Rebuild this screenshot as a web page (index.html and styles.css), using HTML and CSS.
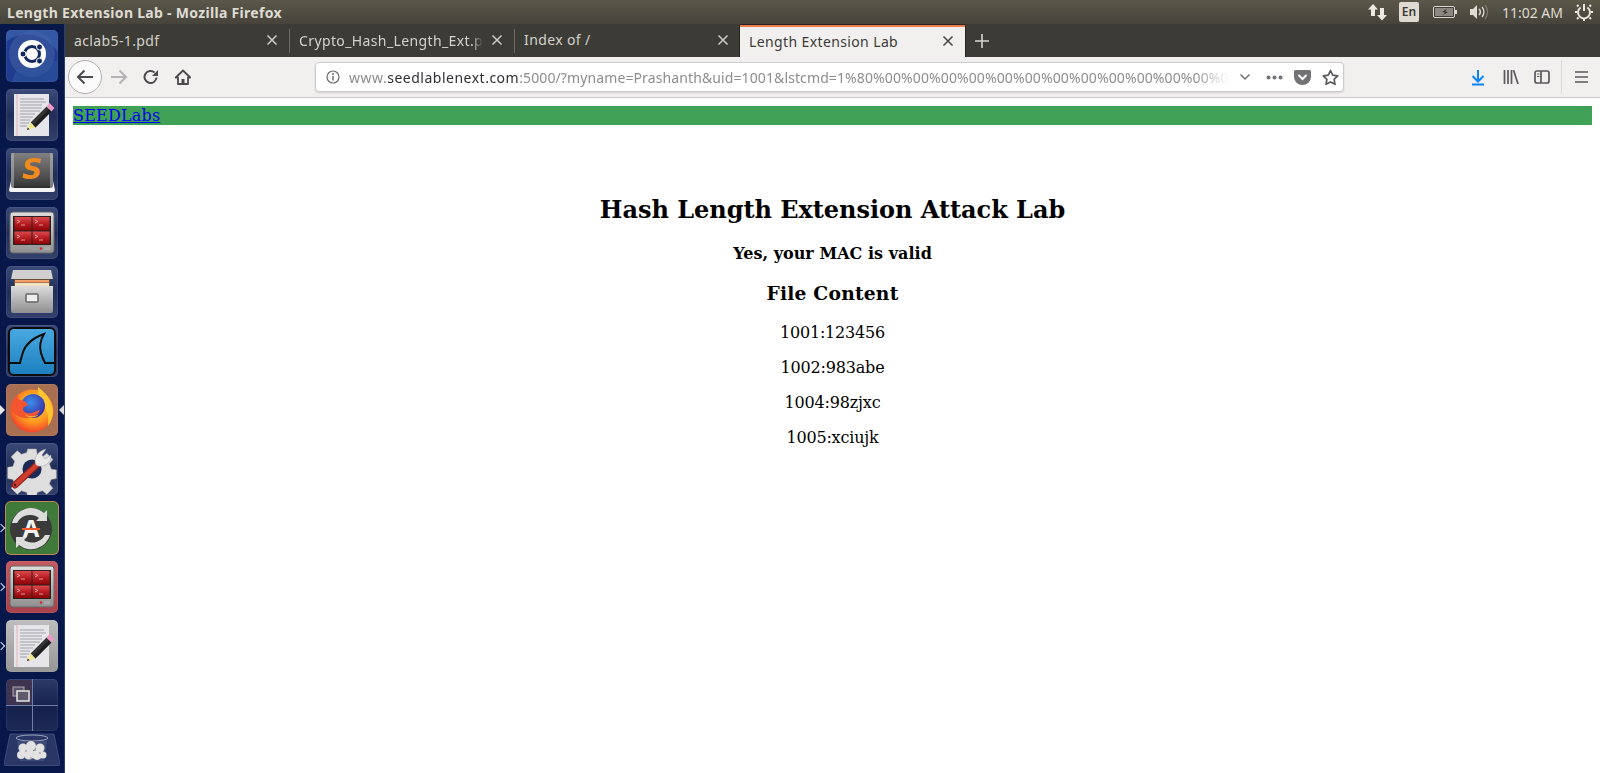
FILE: index.html
```html
<!DOCTYPE html>
<html lang="en">
<head>
<meta charset="utf-8">
<title>Length Extension Lab - Mozilla Firefox</title>
<link rel="stylesheet" href="styles.css">
</head>
<body>
<svg class="defs" aria-hidden="true">
  <defs>
    <linearGradient id="metal" x1="0" y1="0" x2="0" y2="1"><stop offset="0" stop-color="#dcdcdc"/><stop offset="1" stop-color="#8f8f8f"/></linearGradient>
    <linearGradient id="redA" x1="0" y1="0" x2="0" y2="1"><stop offset="0" stop-color="#dc4a4e"/><stop offset=".5" stop-color="#b81c20"/><stop offset="1" stop-color="#8a0508"/></linearGradient>
    <linearGradient id="sharkBlue" x1="0" y1="0" x2="0" y2="1"><stop offset="0" stop-color="#4aa9e0"/><stop offset="1" stop-color="#1b80bf"/></linearGradient>
    <linearGradient id="subBody" x1="0" y1="0" x2="0" y2="1"><stop offset="0" stop-color="#808080"/><stop offset=".75" stop-color="#4a4a4a"/><stop offset="1" stop-color="#2e2e2e"/></linearGradient>
    <radialGradient id="foxRing" cx=".55" cy=".4" r=".65"><stop offset="0" stop-color="#ffd93d"/><stop offset=".55" stop-color="#ff9a1f"/><stop offset="1" stop-color="#f0342c"/></radialGradient>
    <radialGradient id="foxGlobe" cx=".4" cy=".35" r=".7"><stop offset="0" stop-color="#3a8ff0"/><stop offset="1" stop-color="#3b2a9c"/></radialGradient>
    <symbol id="i-editor" viewBox="0 0 52 52">
      <path d="M8 5h35v42H8z" fill="#e6e6ea"/>
      <path d="M11 5v42" stroke="#e6a6a6" stroke-width=".8"/>
      <path d="M14 10h24M14 13h26M14 16h22M14 19h22M14 22h20M14 25h15M14 28h13M14 31h10M14 34h9M14 37h7" stroke="#85858a" stroke-width=".7"/>
      <path d="M24.600 33.500L40.600 17.500 45.400 22.500 29.400 38.500z" fill="#333"/>
      <path d="M27 36L43 20 45.400 22.500 29.400 38.500z" fill="#1f1f1f"/>
      <path d="M40.600 17.500l3-3.500 4.800 5-3 3.500z" fill="#ec9ac6"/>
      <path d="M24.600 33.500l4.800 5-8.400 2.500z" fill="#f4e78a"/>
      <path d="M21 41l.8-2.600 1.800 1.800z" fill="#222"/>
    </symbol>
    <symbol id="i-term" viewBox="0 0 52 52">
      <rect x="4" y="5" width="44" height="41" rx="3" fill="url(#metal)" stroke="#666"/>
      <rect x="7" y="9" width="38" height="29" fill="#2b2020"/>
      <rect x="8.500" y="10" width="17" height="13.500" fill="url(#redA)"/>
      <rect x="26.500" y="10" width="17" height="13.500" fill="url(#redA)"/>
      <rect x="8.500" y="24.500" width="17" height="12.500" fill="url(#redA)"/>
      <rect x="26.500" y="24.500" width="17" height="12.500" fill="url(#redA)"/>
      <path d="M11 13l3 1.500-3 1.500M15 18h4M29 13l3 1.500-3 1.500M33 18h4M11 28l3 1.500-3 1.500M15 33h4M29 28l3 1.500-3 1.500M33 33h4" fill="none" stroke="#f3d0d0" stroke-width=".7"/>
      <circle cx="35" cy="41.500" r="1.200" fill="#e02424"/>
      <rect x="38" y="40" width="6" height="3" fill="#a8a8a8"/>
    </symbol>
  </defs>
</svg>

<header class="panel">
  <span class="panel-title">Length Extension Lab - Mozilla Firefox</span>
  <div class="tray">
    <svg class="tray-arrows" width="19" height="18" viewBox="0 0 19 18"><path d="M5 1L0 6.500h3V13h4V6.500h3zM14 17.500l5-5.500h-3V5h-4v7H9z" fill="#ece9e2"/></svg>
    <span class="tray-lang">En</span>
    <svg class="tray-battery" width="24" height="12" viewBox="0 0 24 12"><rect x=".5" y=".5" width="21" height="11" rx="1.500" fill="#3c3b36" stroke="#d8d6cf"/><rect x="2" y="2" width="18" height="8" fill="#8a8880"/><rect x="22" y="4" width="2" height="4" fill="#d8d6cf"/><path d="M14 2.500L9.500 6l3 .5L9 9.500 15 6l-3-.5z" fill="#2b2a27"/></svg>
    <svg class="tray-volume" width="20" height="16" viewBox="0 0 20 16"><path d="M1 5h3l4-4v14l-4-4H1z" fill="#dedcd5"/><path d="M10 5a4 4 0 0 1 0 6" fill="none" stroke="#dedcd5" stroke-width="1.500"/><path d="M13 3a7.500 7.500 0 0 1 0 10" fill="none" stroke="#dedcd5" stroke-width="1.300"/><path d="M16 1a11 11 0 0 1 0 14" fill="none" stroke="#7d7b73" stroke-width="1.200"/></svg>
    <span class="tray-clock">11:02 AM</span>
    <svg class="tray-gear" width="18" height="18" viewBox="0 0 18 18"><path d="M9 1v7" stroke="#e8e6df" stroke-width="2"/><path d="M5.600 4.500a6 6 0 1 0 6.800 0" fill="none" stroke="#e8e6df" stroke-width="2"/><path d="M9 15v3M2 9H0M18 9h-2M3.500 3.500L2 2M14.500 3.500L16 2M3.500 14.500L2 16M14.500 14.500L16 16" stroke="#e8e6df" stroke-width="2"/></svg>
  </div>
</header>

<div class="workspace">
  <nav class="launcher">
    <div class="tile tile-home">
      <svg viewBox="0 0 52 52"><circle cx="26" cy="24" r="23" fill="#fff" opacity=".1"/><path d="M0 12C14 0 38 2 52 22V0H0z" fill="#3f64ac" opacity=".7"/><path d="M6 52C10 32 30 24 52 32v20z" fill="#2f559f" opacity=".6"/><circle cx="26" cy="24" r="14" fill="#fff"/><circle cx="26" cy="24" r="7.500" fill="none" stroke="#12285f" stroke-width="3"/><circle cx="33.500" cy="17" r="3" fill="#12285f" stroke="#fff"/><circle cx="17" cy="24" r="3" fill="#12285f" stroke="#fff"/><circle cx="33.500" cy="31" r="3" fill="#12285f" stroke="#fff"/></svg>
    </div>
    <div class="tile"><svg viewBox="0 0 52 52"><use href="#i-editor"/></svg></div>
    <div class="tile">
      <svg viewBox="0 0 52 52"><path d="M5 33h42l2 9a2 2 0 0 1-2 2H5a2 2 0 0 1-2-2z" fill="#f4f4f4"/><rect x="5" y="5" width="42" height="35" rx="3" fill="url(#subBody)"/><rect x="5" y="5" width="3" height="35" fill="#c4c4c4" opacity=".5"/><rect x="44" y="5" width="3" height="35" fill="#c4c4c4" opacity=".5"/><text class="sublime" x="26" y="31" text-anchor="middle">S</text></svg>
    </div>
    <div class="tile"><svg viewBox="0 0 52 52"><use href="#i-term"/></svg></div>
    <div class="tile">
      <svg viewBox="0 0 52 52"><path d="M7 4h38l2 9H5z" fill="#d0d0d0"/><path d="M8 13h36v9H8z" fill="#6a4b3a"/><path d="M9 14h34v2.500H9z" fill="#f0a068"/><path d="M9 17h34v3H9z" fill="#f4e3c2"/><path d="M5 20h42v25a2 2 0 0 1-2 2H7a2 2 0 0 1-2-2z" fill="url(#metal)"/><rect x="20" y="28" width="12" height="8" rx="1" fill="#eee" stroke="#666" stroke-width="1.500"/></svg>
    </div>
    <div class="tile">
      <svg viewBox="0 0 52 52"><rect x="3" y="3" width="46" height="47" rx="5" fill="url(#sharkBlue)" stroke="#0c0c0c" stroke-width="2"/><path d="M4 38h10c2-8 3-14 7-18 5-6 11-9 17-11-3 5-5 12-3 19 1 4 3 8 4 10h9" fill="none" stroke="#0c0c0c" stroke-width="2"/></svg>
    </div>
    <div class="tile tile-active">
      <span class="pip pip-solid-l"></span><span class="pip pip-solid-r"></span>
      <svg viewBox="0 0 52 52"><circle cx="26" cy="27" r="21.500" fill="url(#foxRing)"/><path d="M32 3c5 4 14 11 15 24 0 6-2 11-5 15 1-7 0-13-4-19-3-5-7-11-6-20z" fill="#ffc42e"/><circle cx="27" cy="22" r="12" fill="url(#foxGlobe)"/><path d="M5 22c1-5 4-9 7-12-1 3 0 5 2 6 4 0 7 3 8 5-2 1-5 2-5 4 0 3 5 5 9 4 3-1 6-3 8-3-2 5-8 9-15 8-8-1-14-5-14-12z" fill="#f4552e"/><path d="M19 30c4 3 10 3 14 0-2 4-12 5-14 0z" fill="#ffb52e"/></svg>
    </div>
    <div class="tile">
      <svg viewBox="0 0 52 52"><g transform="translate(3.400 3.400) scale(.87)"><path d="M21 3h10l1 7 6 2 5-4 7 7-4 5 2 6 6 1v10l-6 1-2 5 4 5-7 7-5-4-6 2-1 5H21l-1-5-6-2-5 4-7-7 4-5-2-5-6-1V24l6-1 2-6-4-5 7-7 5 4 6-2z" fill="#dedede" stroke="#a8a8a8" stroke-width=".6"/><circle cx="26" cy="26" r="11" fill="#1d2a58"/></g><path d="M9 42L33 20" stroke="#8e2118" stroke-width="7" stroke-linecap="round"/><path d="M9 42L33 20" stroke="#cf3d2e" stroke-width="4.500" stroke-linecap="round"/><circle cx="9" cy="42" r="1.300" fill="#5a120c"/><path d="M30 22c-3-6 1-14 10-16l-4 6 3 4 6-4c1 8-8 14-15 10z" fill="#e8e8e8" stroke="#999" stroke-width=".5"/></svg>
    </div>
    <div class="tile tile-update">
      <span class="pip pip-hollow"></span>
      <svg viewBox="0 0 52 52"><circle cx="25" cy="27" r="21" fill="#3a3a3a"/><path d="M6 21A19.500 19.500 0 0 1 38 11l3-3v11H30l3-3A14.500 14.500 0 0 0 11 21z" fill="#dcdcdc"/><path d="M44 33A19.500 19.500 0 0 1 13 43l-3 3V35h11l-3 3a14.500 14.500 0 0 0 21-5z" fill="#dcdcdc"/><text class="update-a" x="25" y="35" text-anchor="middle">A</text><rect x="16" y="26" width="18" height="2" fill="#f0582c"/></svg>
    </div>
    <div class="tile tile-term-on">
      <span class="pip pip-hollow"></span>
      <svg viewBox="0 0 52 52"><use href="#i-term"/></svg>
    </div>
    <div class="tile tile-editor-on">
      <span class="pip pip-hollow"></span>
      <svg viewBox="0 0 52 52"><use href="#i-editor"/></svg>
    </div>
    <div class="tile tile-spaces">
      <svg viewBox="0 0 52 52"><rect x="1" y="1" width="25" height="25" fill="#3e3450"/><path d="M26.500 0v52M0 26.500h52" stroke="#727da3" stroke-width="1"/><rect x="7" y="8" width="11" height="9" fill="#5b556c" stroke="#aaa"/><rect x="11" y="12" width="12" height="10" fill="#5f5a6b" stroke="#e6e6e6" stroke-width="1.500"/></svg>
    </div>
    <div class="trash">
      <svg viewBox="0 0 56 33"><path d="M6 1h44l6 30a1.500 1.500 0 0 1-1.500 1.500h-53A1.500 1.500 0 0 1 0 31z" fill="#2a3766" stroke="#4d5a88" stroke-width=".7"/><ellipse cx="28" cy="5" rx="16" ry="3" fill="none" stroke="#9aa3bc" stroke-width="1"/><path d="M13 8l3 20h24l3-20" fill="#46527c" opacity=".7"/><g fill="#e2e2e2"><circle cx="19" cy="15" r="4.500"/><circle cx="27" cy="13" r="5"/><circle cx="36" cy="15" r="4.500"/><circle cx="17" cy="22" r="4"/><circle cx="25" cy="21" r="5.500"/><circle cx="33" cy="22" r="5"/><circle cx="39" cy="22" r="3.500"/></g><g fill="#a9a9a9"><circle cx="22" cy="18" r="1"/><circle cx="31" cy="17" r="1"/><circle cx="27" cy="25" r="1"/><circle cx="36" cy="20" r="1"/></g></svg>
    </div>
  </nav>

  <div class="browser">
    <div class="tabstrip">
      <div class="tab tab-sep"><span class="tab-title">aclab5-1.pdf</span><svg class="tab-close" width="12" height="12" viewBox="0 0 12 12"><path d="M1.500 1.500l9 9M10.500 1.500l-9 9"/></svg></div>
      <div class="tab tab-sep"><span class="tab-title tab-fade">Crypto_Hash_Length_Ext.p</span><svg class="tab-close" width="12" height="12" viewBox="0 0 12 12"><path d="M1.500 1.500l9 9M10.500 1.500l-9 9"/></svg></div>
      <div class="tab"><span class="tab-title">Index of /</span><svg class="tab-close" width="12" height="12" viewBox="0 0 12 12"><path d="M1.500 1.500l9 9M10.500 1.500l-9 9"/></svg></div>
      <div class="tab tab-active"><span class="tab-title">Length Extension Lab</span><svg class="tab-close" width="12" height="12" viewBox="0 0 12 12"><path d="M1.500 1.500l9 9M10.500 1.500l-9 9"/></svg></div>
      <svg class="tab-new" width="14" height="14" viewBox="0 0 14 14"><path d="M7 0v14M0 7h14" stroke="#d8d6d0" stroke-width="1.600"/></svg>
    </div>

    <div class="navbar">
      <span class="back-btn"><svg width="18" height="18" viewBox="0 0 18 18"><path d="M17 9H2M8.500 2.500L2 9l6.500 6.500" fill="none" stroke="#4a4a4f" stroke-width="2"/></svg></span>
      <svg class="nav-fwd" width="18" height="18" viewBox="0 0 18 18"><path d="M1 9h15M9.500 2.500L16 9l-6.500 6.500" fill="none" stroke="#b4b4b6" stroke-width="2"/></svg>
      <svg class="nav-reload" width="16" height="16" viewBox="0 0 16 16"><path d="M13.500 8.500A6 6 0 1 1 11.500 3.500" fill="none" stroke="#4a4a4f" stroke-width="2"/><path d="M15 1v6H9z" fill="#4a4a4f"/></svg>
      <svg class="nav-home" width="16" height="16" viewBox="0 0 16 16"><path d="M8 1.500L.8 8.500h2.200V15h10V8.500h2.200z" fill="none" stroke="#4a4a4f" stroke-width="1.800" stroke-linejoin="round"/><path d="M6.500 15v-5h3v5" fill="#4a4a4f"/></svg>
      <div class="urlbar">
        <svg class="url-info" width="14" height="14" viewBox="0 0 14 14"><circle cx="7" cy="7" r="6" fill="none" stroke="#6b6b6e" stroke-width="1.200"/><path d="M7 6v4.500" stroke="#6b6b6e" stroke-width="1.500"/><circle cx="7" cy="3.900" r="1" fill="#6b6b6e"/></svg>
        <span class="url-text"><span class="url-pre">www.</span><span class="url-host">seedlablenext.com</span>:5000/?myname=Prashanth&amp;uid=1001&amp;lstcmd=1%80%00%00%00%00%00%00%00%00%00%00%00%00%0</span>
        <svg class="url-chevron" width="12" height="8" viewBox="0 0 12 8"><path d="M1.500 1.500L6 6l4.500-4.500" fill="none" stroke="#737377" stroke-width="1.500"/></svg>
        <svg class="url-dots" width="17" height="5" viewBox="0 0 17 5"><circle cx="2.500" cy="2.500" r="2" fill="#737377"/><circle cx="8.500" cy="2.500" r="2" fill="#737377"/><circle cx="14.500" cy="2.500" r="2" fill="#737377"/></svg>
        <svg class="url-pocket" width="17" height="16" viewBox="0 0 17 16"><path d="M1.500 1h14A1.500 1.500 0 0 1 17 2.500V8A8.500 8 0 0 1 0 8V2.500A1.500 1.500 0 0 1 1.500 1z" fill="#737377"/><path d="M4.500 6l4 4 4-4" fill="none" stroke="#fff" stroke-width="2"/></svg>
        <svg class="url-star" width="17" height="17" viewBox="0 0 17 17"><path d="M8.500 1.500l2.200 4.600 5 .7-3.600 3.500.9 5-4.500-2.400L4 15.300l.9-5L1.300 6.800l5-.7z" fill="none" stroke="#5a5a5e" stroke-width="1.700" stroke-linejoin="round"/></svg>
      </div>
      <svg class="tool-download" width="14" height="17" viewBox="0 0 14 17"><path d="M7 1v11M1.500 7L7 12.500 12.500 7" fill="none" stroke="#0a84ff" stroke-width="2"/><path d="M1 15.500h12" stroke="#0a84ff" stroke-width="2"/></svg>
      <svg class="tool-library" width="16" height="14" viewBox="0 0 16 14"><path d="M1.500 0v14M5 0v14M8.500 0v14M10.500 0l4.500 14" stroke="#5a5a5e" stroke-width="1.700" fill="none"/></svg>
      <svg class="tool-sidebar" width="16" height="14" viewBox="0 0 16 14"><rect x="1" y="1" width="14" height="12" rx="2" fill="none" stroke="#5a5a5e" stroke-width="1.700"/><path d="M7 1v12" stroke="#5a5a5e" stroke-width="1.700"/><path d="M3 4h2.500M3 6.500h2.500" stroke="#5a5a5e" stroke-width="1.200"/></svg>
      <span class="tool-sep"></span>
      <svg class="tool-menu" width="13" height="12" viewBox="0 0 13 12"><path d="M0 1h13M0 6h13M0 11h13" stroke="#5a5a5e" stroke-width="1.600"/></svg>
    </div>

    <main class="page">
      <div class="seedbar"><a href="#">SEEDLabs</a></div>
      <h2>Hash Length Extension Attack Lab</h2>
      <h4>Yes, your MAC is valid</h4>
      <h3>File Content</h3>
      <p>1001:123456</p>
      <p>1002:983abe</p>
      <p>1004:98zjxc</p>
      <p>1005:xciujk</p>
    </main>
  </div>
</div>
</body>
</html>
```
FILE: styles.css
```css
html, body { margin: 0; height: 100%; overflow: hidden; }
body { display: flex; flex-direction: column; font-family: "DejaVu Serif", serif; background: #fff; }
.defs { display: block; width: 0; height: 0; flex: none; }

.panel { flex: none; height: 24px; display: flex; align-items: center; padding-left: 7px; background: linear-gradient(#5b5749, #45433b); font-family: "Noto Sans", sans-serif; }
.panel-title { font-size: 14px; font-weight: 700; color: #dfdbd2; letter-spacing: .3px; }
.tray { margin-left: auto; display: flex; align-items: center; height: 24px; }
.tray-arrows { margin-right: 12px; }
.tray-lang { width: 20px; height: 20px; border-radius: 2px; background: #dfdbd2; color: #3c3b37; font-size: 12px; font-weight: 600; line-height: 20px; text-align: center; margin-right: 14px; }
.tray-battery { margin-right: 12px; }
.tray-volume { margin-right: 13px; }
.tray-clock { font-size: 14px; color: #dfdbd2; margin-right: 12px; }
.tray-gear { margin-right: 7px; }

.workspace { flex: 1; min-height: 0; display: flex; }

.launcher { flex: none; width: 58px; border-right: 1px solid #2a3d7a; background: #08174a; display: flex; flex-direction: column; align-items: flex-start; padding: 6px 0 0 6px; gap: 7px; }
.tile { position: relative; width: 52px; height: 52px; border-radius: 5px; background: linear-gradient(#3b4a78, #222e59 50%, #33406b); box-shadow: inset 0 0 0 1px rgba(255,255,255,.07); flex: none; }
.tile > svg { display: block; width: 52px; height: 52px; }
.tile-home { background: #1f3d8f; overflow: hidden; }
.tile-active { background: #a96f52; }
.tile-update { background: #3f7a3a; box-shadow: 0 0 0 1px #c08a4e; }
.tile-term-on { background: linear-gradient(#c25a60, #a9414a); }
.tile-editor-on { background: linear-gradient(#bdbdbd, #979797); }
.tile-spaces { background: linear-gradient(#2d3a68, #141f4c 55%, #1e2a56); }
.trash { width: 56px; height: 33px; margin: -5px 0 0 -2px; flex: none; }
.trash svg { display: block; width: 56px; height: 33px; }

.pip { position: absolute; top: 21px; width: 0; height: 0; border-top: 5px solid transparent; border-bottom: 5px solid transparent; }
.pip-solid-l { left: -6px; border-left: 5px solid #e8e8e8; }
.pip-solid-r { right: -6px; border-right: 5px solid #d8d8d8; }
.pip-hollow { left: -8px; top: 23px; width: 5px; height: 5px; border: 0; border-top: 1px solid #cfe0f0; border-right: 1px solid #cfe0f0; transform: rotate(45deg); }

.browser { flex: 1; min-width: 0; display: flex; flex-direction: column; }

.tabstrip { flex: none; height: 33px; display: flex; background: #3c3b36; font-family: "Noto Sans", sans-serif; }
.tab { flex: none; width: 225px; box-sizing: border-box; padding: 0 11px 2px 9px; display: flex; align-items: center; color: #d4d2cb; font-size: 14px; position: relative; }
.tab-sep { border-right: 1px solid #6d6b64; margin: 5px 0 4px; height: 24px; }
.tab-title { flex: 1; min-width: 0; white-space: nowrap; overflow: hidden; letter-spacing: .38px; }
.tab-fade { -webkit-mask-image: linear-gradient(to right, #000 94%, transparent); mask-image: linear-gradient(to right, #000 94%, transparent); }
.tab-close { flex: none; margin-left: 8px; fill: none; stroke: #cfcdc6; stroke-width: 1.500; }
.tab-active { background: #f2f0ee; color: #3c3b37; border-top: 2px solid #ec7a4c; box-shadow: 0 -1px 0 #26251f, 1px 0 0 #26251f, -1px 0 0 #26251f; margin-top: 1px; }
.tab-active .tab-close { stroke: #45443f; }
.tab-new { align-self: center; margin-left: 10px; }

.navbar { flex: none; height: 41px; box-sizing: border-box; border-bottom: 1px solid #cfcdcb; background: #f2f0ee; display: flex; align-items: center; padding-left: 3px; }
.back-btn { flex: none; width: 34px; height: 34px; border-radius: 50%; border: 1px solid #b0b0b0; background: #fbfbfb; display: flex; align-items: center; justify-content: center; box-sizing: border-box; }
.nav-fwd { margin-left: 8px; }
.nav-reload { margin-left: 15px; }
.nav-home { margin-left: 16px; }
.urlbar { flex: none; width: 1029px; height: 30px; margin-left: 124px; box-sizing: border-box; display: flex; align-items: center; background: #fff; border: 1px solid #cbcbcb; border-radius: 4px; box-shadow: 0 1px 2px rgba(0,0,0,.12); }
.url-info { flex: none; margin-left: 10px; }
.url-text { flex: none; width: 881px; margin-left: 9px; font-family: "Noto Sans", sans-serif; font-size: 14px; color: #8d8d8d; white-space: nowrap; overflow: hidden; letter-spacing: .11px; -webkit-mask-image: linear-gradient(to right, #000 96%, transparent); mask-image: linear-gradient(to right, #000 96%, transparent); }
.url-pre { letter-spacing: .5px; }
.url-host { color: #2f2f33; letter-spacing: .5px; }
.url-chevron { flex: none; margin-left: 9px; }
.url-dots { flex: none; margin-left: 15px; }
.url-pocket { flex: none; margin-left: 11px; }
.url-star { flex: none; margin-left: 11px; }
.tool-download { flex: none; margin-left: 127px; }
.tool-library { flex: none; margin-left: 18px; }
.tool-sidebar { flex: none; margin-left: 15px; }
.tool-sep { flex: none; width: 1px; height: 34px; background: #dcdad8; margin-left: 11px; }
.tool-menu { flex: none; margin-left: 13px; }

.page { flex: 1; min-height: 0; padding: 8px; background: #fff; color: #000; text-align: center; font-size: 16px; overflow: hidden; }
.seedbar { background: #3fa156; text-align: left; line-height: 19px; }
.seedbar a { color: #0000ee; text-decoration: underline; letter-spacing: .2px; }
.page h2 { margin: 70px 0 20px; font-size: 24px; letter-spacing: -.03px; }
.page h4 { margin: 20px 0 19px; font-size: 16px; letter-spacing: .03px; }
.page h3 { margin: 19px 0; font-size: 18.72px; letter-spacing: .2px; }
.page p { margin: 16px 0; letter-spacing: -.18px; }

.sublime { font-family: "DejaVu Sans", sans-serif; font-size: 28px; font-weight: 700; font-style: italic; fill: #f08a1d; }
.update-a { font-family: "Noto Sans", sans-serif; font-size: 24px; font-weight: 700; fill: #f2f2f2; }
```
